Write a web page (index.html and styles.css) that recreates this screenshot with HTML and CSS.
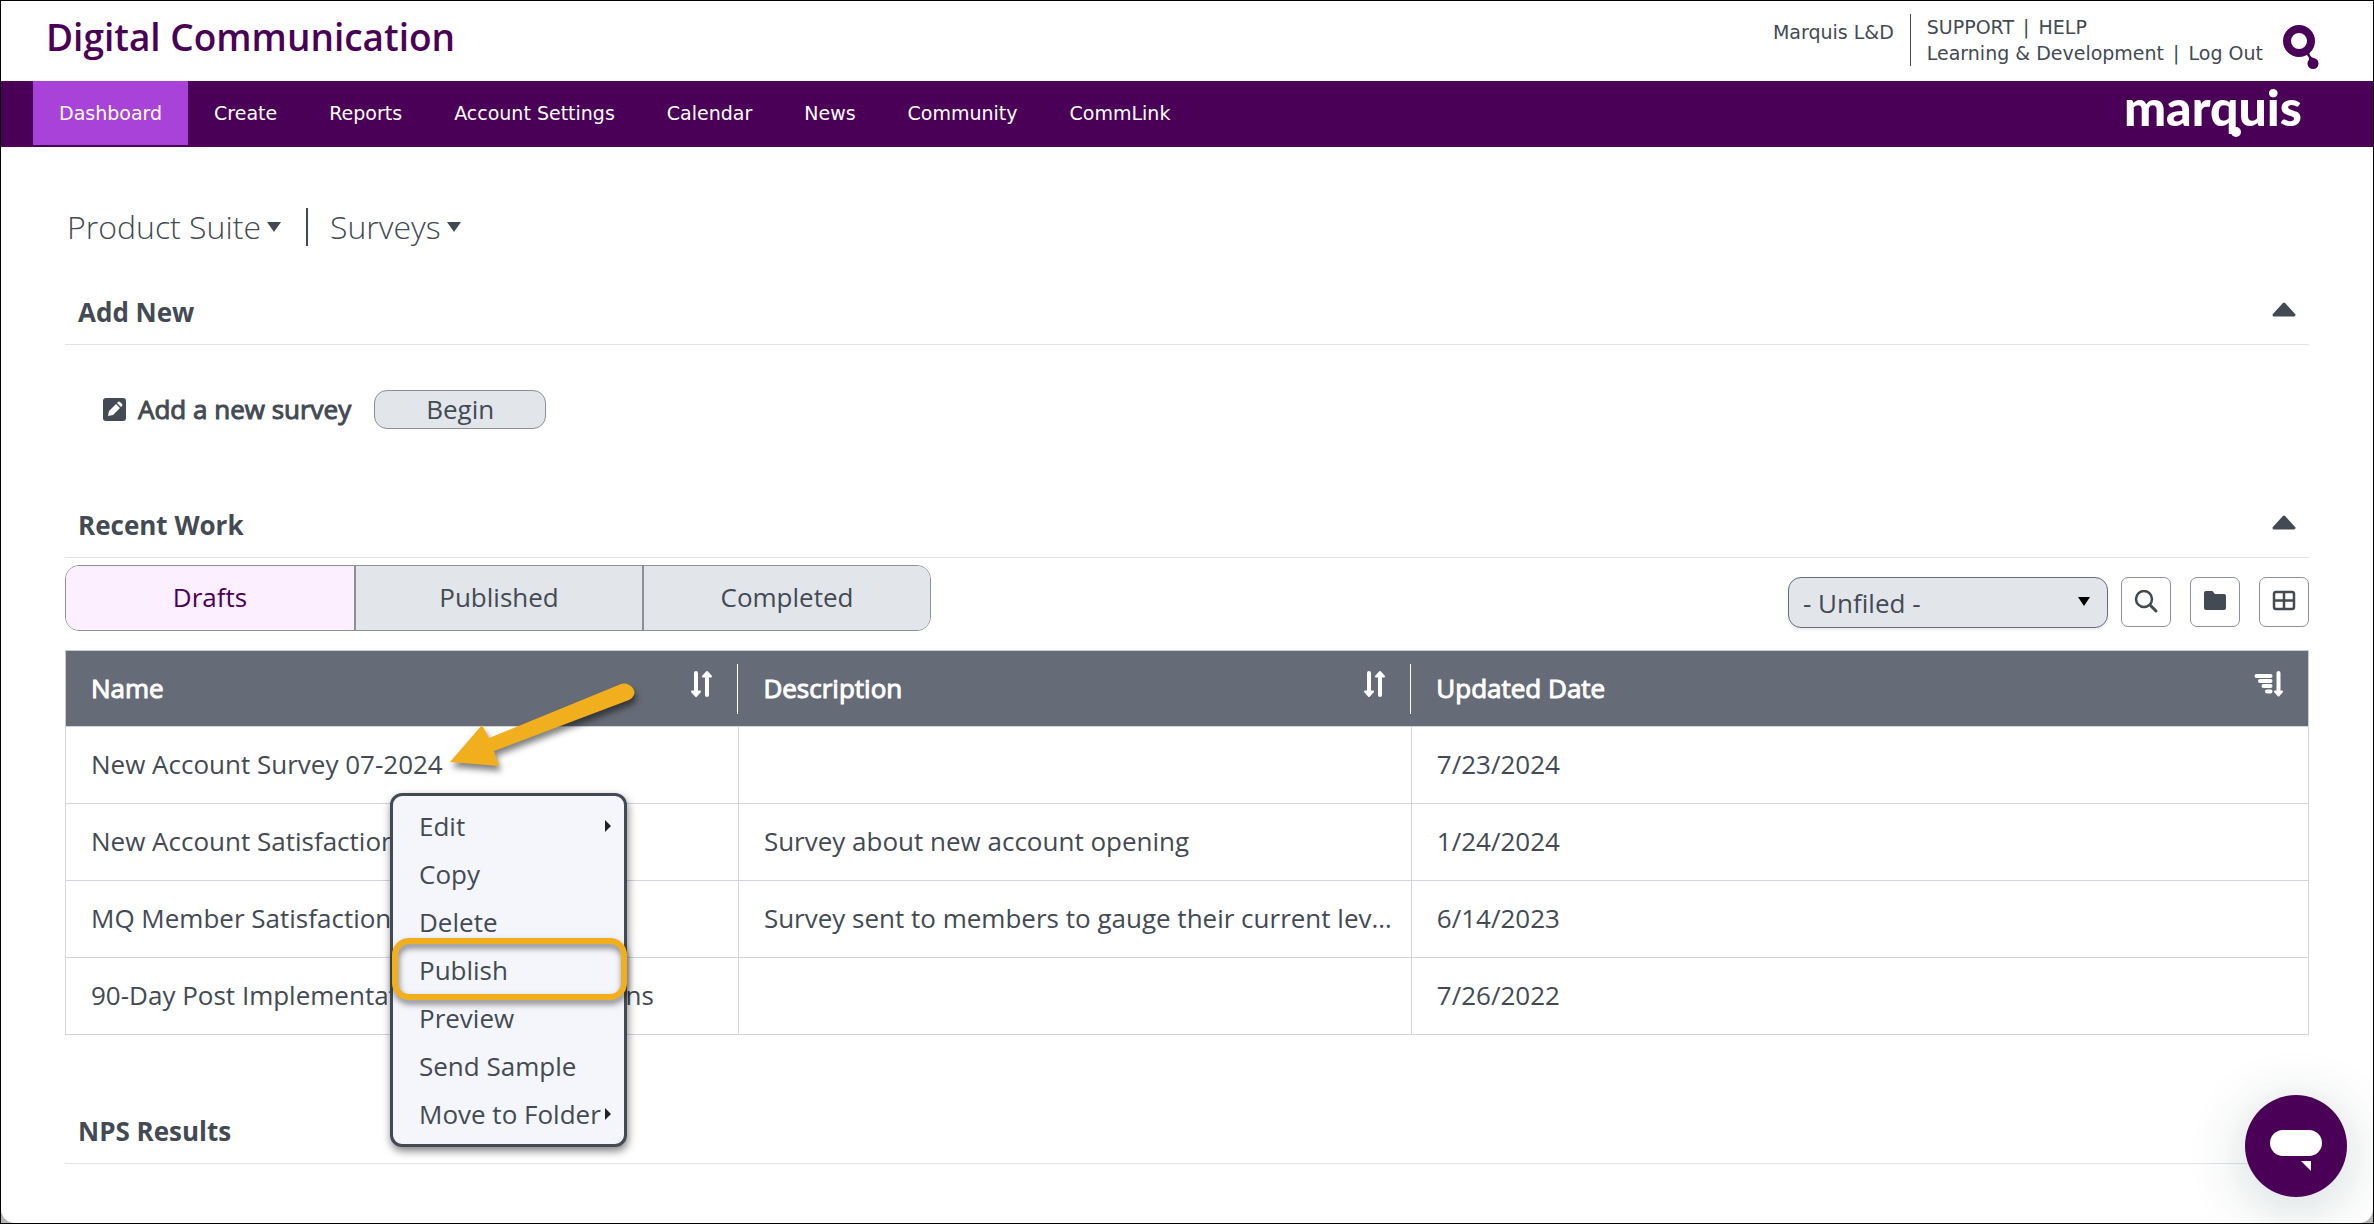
FILE: index.html
```html
<!DOCTYPE html>
<html lang="en">
<head>
    <meta charset="UTF-8">
    <meta name="viewport" content="width=device-width, initial-scale=1.0">
    <title>Digital Communication</title>
    <link rel="stylesheet" href="styles.css">
</head>
<body>
    <svg class="defs" width="0" height="0">
        <symbol id="sort" viewBox="0 0 24 28">
            <g stroke="#fff" stroke-width="4" stroke-linecap="round" stroke-linejoin="round" fill="#fff">
                <path d="M7 3v17M18 8v17"/>
                <path d="M3 21.500h8L7 26zM14 6.500h8L18 2z" stroke-width="2"/>
            </g>
        </symbol>
    </svg>

    <div class="page">
        <header class="top-bar">
            <h1>Digital Communication</h1>
            <div class="account">
                <span class="account-name">Marquis L&amp;D</span>
                <div class="account-links">
                    <div><a href="#">SUPPORT</a> <span class="sep">|</span> <a href="#">HELP</a></div>
                    <div><a href="#">Learning &amp; Development</a> <span class="sep">|</span> <a href="#">Log Out</a></div>
                </div>
                <svg class="brand-mark" viewBox="0 0 36 46">
                    <circle cx="16" cy="17" r="12" fill="none" stroke="#4b0058" stroke-width="8"/>
                    <path d="M22 30q5 2 4 8l6-4q-5 0-6-6z" fill="#4b0058"/>
                    <circle cx="30" cy="39.500" r="5.500" fill="#4b0058"/>
                </svg>
            </div>
        </header>

        <nav class="main-nav">
            <a class="active" href="#">Dashboard</a>
            <a href="#">Create</a>
            <a href="#">Reports</a>
            <a href="#">Account Settings</a>
            <a href="#">Calendar</a>
            <a href="#">News</a>
            <a href="#">Community</a>
            <a href="#">CommLink</a>
            <span class="logo">mar<span class="logo-q">q</span>uis</span>
        </nav>

        <main>
            <div class="breadcrumb">
                <button type="button">Product Suite<span class="arrow-down"></span></button>
                <button type="button">Surveys<span class="arrow-down"></span></button>
            </div>

            <section class="add-new">
                <div class="section-head">
                    <h2>Add New</h2>
                    <button type="button" class="toggle" aria-label="Collapse Add New">
                        <svg width="24" height="15" viewBox="0 0 24 15"><path d="M12 2L22 13H2z"/></svg>
                    </button>
                </div>
                <div class="add-row">
                    <svg width="23" height="23" viewBox="0 0 23 23">
                        <rect width="23" height="23" rx="3" fill="#434a54"/>
                        <path d="M5 18l1-5 7-7 4 4-7 7zM14 5l1-1q1-1 2 0l2 2q1 1 0 2l-1 1z" fill="#fff"/>
                    </svg>
                    <span class="add-label">Add a new survey</span>
                    <button type="button" class="begin">Begin</button>
                </div>
            </section>

            <section class="recent">
                <div class="section-head">
                    <h2>Recent Work</h2>
                    <button type="button" class="toggle" aria-label="Collapse Recent Work">
                        <svg width="24" height="15" viewBox="0 0 24 15"><path d="M12 2L22 13H2z"/></svg>
                    </button>
                </div>
                <div class="toolbar">
                    <div class="tabs">
                        <button type="button" class="selected">Drafts</button>
                        <button type="button">Published</button>
                        <button type="button">Completed</button>
                    </div>
                    <div class="tools">
                        <div class="folder-select">
                            <select aria-label="Folder">
                                <option>- Unfiled -</option>
                            </select>
                        </div>
                        <button type="button" class="tool" aria-label="Search">
                            <svg width="24" height="24" viewBox="0 0 24 24" fill="none" stroke="#434a54">
                                <circle cx="10" cy="9" r="8" stroke-width="2.500"/>
                                <path d="M16 15l6 6" stroke-width="3" stroke-linecap="round"/>
                            </svg>
                        </button>
                        <button type="button" class="tool" aria-label="Folders">
                            <svg width="24" height="24" viewBox="0 0 24 24" fill="#434a54">
                                <path d="M3 1h6q1 0 2 2l1 1h9q2 0 2 2v12q0 2-2 2H3q-2 0-2-2V3q0-2 2-2z"/>
                            </svg>
                        </button>
                        <button type="button" class="tool" aria-label="Grid view">
                            <svg width="24" height="24" viewBox="0 0 24 24" fill="none" stroke="#434a54" stroke-width="2.500">
                                <rect x="2" y="2" width="20" height="17" rx="2"/>
                                <path d="M12 2v17M2 10.500h20"/>
                            </svg>
                        </button>
                    </div>
                </div>

                <table>
                    <thead>
                        <tr>
                            <th class="col-name"><div>Name
                                <svg width="24" height="28" viewBox="0 0 24 28"><use href="#sort"/></svg></div></th>
                            <th class="col-desc"><div>Description
                                <svg width="24" height="28" viewBox="0 0 24 28"><use href="#sort"/></svg></div></th>
                            <th><div>Updated Date
                                <svg width="30" height="28" viewBox="0 0 30 28" stroke="#fff" stroke-width="4" stroke-linecap="round">
                                    <path d="M2.500 6h14M6 11h10.500M9.500 16h7M13 21.500h3.500M24.500 3v17"/>
                                    <path d="M21 21.500h7l-3.500 4z" fill="#fff" stroke-width="2" stroke-linejoin="round"/>
                                </svg></div></th>
                        </tr>
                    </thead>
                    <tbody>
                        <tr>
                            <td class="menu-cell">New Account Survey 07-2024
                                <svg class="pointer" width="200" height="100" viewBox="0 0 200 100">
                                    <path d="M7 78L39 41L46 54L178 0Q184 -2 189 3Q194 9 189 14L186 16L51 67L56 82Z" fill="#f1ae1d"/>
                                </svg>
                                <ul class="context-menu">
                                    <li><a href="#">Edit<span class="arrow-right"></span></a></li>
                                    <li><a href="#">Copy</a></li>
                                    <li><a href="#">Delete</a></li>
                                    <li class="marked"><a href="#">Publish</a></li>
                                    <li><a href="#">Preview</a></li>
                                    <li><a href="#">Send Sample</a></li>
                                    <li><a href="#">Move to Folder<span class="arrow-right"></span></a></li>
                                </ul>
                            </td>
                            <td></td>
                            <td>7/23/2024</td>
                        </tr>
                        <tr>
                            <td>New Account Satisfaction</td>
                            <td>Survey about new account opening</td>
                            <td>1/24/2024</td>
                        </tr>
                        <tr>
                            <td>MQ Member Satisfaction</td>
                            <td>Survey sent to members to gauge their current level of satisfaction</td>
                            <td>6/14/2023</td>
                        </tr>
                        <tr>
                            <td>90-Day Post Implementation Survey Questions</td>
                            <td></td>
                            <td>7/26/2022</td>
                        </tr>
                    </tbody>
                </table>
            </section>

            <section class="nps">
                <div class="section-head">
                    <h2>NPS Results</h2>
                </div>
            </section>
        </main>

        <button type="button" class="chat" aria-label="Open chat">
            <svg width="102" height="102" viewBox="0 0 102 102" fill="#fff">
                <rect x="25" y="35" width="52" height="26" rx="13"/>
                <path d="M56 66h10v10z"/>
            </svg>
        </button>
    </div>
</body>
</html>
```

FILE: styles.css
```css
* {
    box-sizing: border-box;
}
body {
    margin: 0;
    background-color: #b5b5b5;
    font-family: "Open Sans", sans-serif;
    font-size: 26px;
    line-height: 36px;
    color: #434a54;
    border: 1px solid #000;
}
a {
    color: inherit;
    text-decoration: none;
}
button, select {
    font: inherit;
    color: inherit;
    margin: 0;
    padding: 0;
    border: none;
    background: none;
    cursor: pointer;
}
svg {
    display: block;
}
.defs {
    position: absolute;
}
.page {
    min-height: calc(100vh - 2px);
    background-color: #fff;
    border-radius: 0 0 14px 14px;
}

/* header */
.top-bar {
    display: flex;
    justify-content: space-between;
    height: 80px;
    padding: 0 54px 0 45px;
}
h1 {
    margin: 0;
    font-size: 37px;
    font-weight: 600;
    line-height: 72px;
    color: #4b0058;
}
.account {
    display: flex;
    align-items: flex-start;
    font-family: Verdana, "DejaVu Sans", sans-serif;
    font-size: 19px;
    line-height: 26px;
}
.account-name {
    padding-top: 18px;
}
.account-links {
    margin: 13px 20px 0 16px;
    padding-left: 16px;
    border-left: 1px solid #434a54;
}
.sep {
    margin: 0 3px;
}
.brand-mark {
    width: 36px;
    height: 46px;
    margin-top: 23px;
}
.main-nav {
    display: flex;
    height: 66px;
    padding: 0 71px 2px 32px;
    background-color: #4b0058;
    color: #fff;
    font-family: Verdana, "DejaVu Sans", sans-serif;
    font-size: 19px;
    line-height: 64px;
}
.main-nav a {
    padding: 0 26px;
}
.main-nav .active {
    background-color: #a842d9;
}
.logo {
    margin-left: auto;
    font-family: Lato, sans-serif;
    font-size: 50px;
    font-weight: 900;
    line-height: 52px;
}
.logo-q {
    position: relative;
}
.logo-q::after {
    content: "";
    position: absolute;
    right: -2px;
    bottom: 0;
    width: 10px;
    height: 10px;
    border-radius: 50%;
    background-color: #fff;
}

/* content */
main {
    padding: 54px 64px 0;
}
.breadcrumb {
    display: flex;
    align-items: center;
    height: 52px;
    padding-left: 2px;
    font-size: 32px;
    font-weight: 300;
}
.breadcrumb button {
    display: flex;
    align-items: center;
    height: 38px;
    line-height: 38px;
}
.breadcrumb button + button {
    margin-left: 25px;
    padding-left: 22px;
    border-left: 2px solid #434a54;
}
.arrow-down {
    margin-left: 6px;
    border: 7px solid transparent;
    border-top: 10px solid #434a54;
    border-bottom: none;
}
.section-head {
    display: flex;
    align-items: center;
    justify-content: space-between;
    height: 64px;
    padding: 0 13px 2px 13px;
    border-bottom: 1px solid #dfe2e8;
}
h2 {
    margin: 0;
    font-size: 26px;
    font-weight: 700;
}
.toggle {
    padding-bottom: 5px;
}
.toggle svg {
    fill: #434a54;
    stroke: #434a54;
    stroke-width: 3;
    stroke-linejoin: round;
}
.add-new {
    margin-top: 28px;
}
.add-row {
    display: flex;
    align-items: center;
    padding: 45px 38px 0;
}
.add-label {
    margin: 0 23px 0 12px;
    padding-bottom: 2px;
    -webkit-text-stroke: 1px;
}
.begin {
    width: 172px;
    height: 39px;
    padding-bottom: 2px;
    border: 1px solid #8a8f99;
    border-radius: 13px;
    background-color: #e2e5ea;
}
.recent {
    margin-top: 65px;
}
.toolbar {
    display: flex;
    justify-content: space-between;
    padding: 7px 0 19px;
}
.tabs {
    display: flex;
    border: 1px solid #8a8f99;
    border-radius: 14px;
    overflow: hidden;
}
.tabs button {
    width: 288px;
    height: 64px;
    padding-bottom: 2px;
    background-color: #e2e5ea;
}
.tabs button + button {
    border-left: 2px solid #8a8f99;
}
.tabs .selected {
    background-color: #fcefff;
    color: #4b0058;
}
.tools {
    display: flex;
    gap: 19px;
    padding-top: 12px;
}
.folder-select {
    position: relative;
    margin-right: -6px;
}
.folder-select::after {
    content: "";
    position: absolute;
    top: 20px;
    right: 18px;
    border: 6px solid transparent;
    border-top: 9px solid #000;
    border-bottom: none;
    pointer-events: none;
}
select {
    appearance: none;
    display: block;
    width: 320px;
    height: 51px;
    padding: 0 14px;
    border: 1px solid #666c77;
    border-radius: 13px;
    background-color: #e2e5ea;
    box-shadow: 0 2px 3px rgba(0, 0, 0, 0.08);
}
.tool {
    display: flex;
    align-items: center;
    justify-content: center;
    width: 50px;
    height: 50px;
    border: 1px solid #8a8f99;
    border-radius: 7px;
}

/* table */
table {
    width: 100%;
    table-layout: fixed;
    border-collapse: collapse;
    border: 1px solid #c9cad4;
}
th {
    height: 76px;
    padding: 0;
    background-color: #666c77;
    color: #fff;
    font-weight: 400;
    text-align: left;
    -webkit-text-stroke: 1px;
}
th div {
    display: flex;
    justify-content: space-between;
    height: 50px;
    padding: 6px 24px 8px 25px;
    border-right: 1px solid #fff;
}
th:last-child div {
    border-right: none;
}
.col-name, .col-desc {
    width: 30%;
}
td {
    height: 77px;
    padding: 0 18px 3px 25px;
    border: 1px solid #d4d5dc;
    white-space: nowrap;
    overflow: hidden;
    text-overflow: ellipsis;
}
.menu-cell {
    position: relative;
    overflow: visible;
}

/* context menu */
.context-menu {
    position: absolute;
    z-index: 2;
    top: 66px;
    left: 324px;
    width: 237px;
    margin: 0;
    padding: 6px 0;
    list-style: none;
    border: 3px solid #434a54;
    border-radius: 12px;
    background-color: #f4f6fb;
    box-shadow: 1px 4px 8px rgba(0, 0, 0, 0.5);
}
.context-menu a {
    position: relative;
    display: block;
    padding-left: 26px;
    line-height: 48px;
}
.arrow-right {
    position: absolute;
    top: 18px;
    right: 13px;
    border: 6px solid transparent;
    border-left-color: #222;
    border-right: none;
}
.marked {
    position: relative;
}
.marked::after {
    content: "";
    position: absolute;
    inset: -8px -3px -6px -1px;
    border: 6px solid #f1ae1d;
    border-radius: 17px;
    filter: drop-shadow(1px 4px 3px rgba(0, 0, 0, 0.5));
    pointer-events: none;
}
.pointer {
    position: absolute;
    z-index: 3;
    top: -43px;
    left: 377px;
    overflow: visible;
    filter: drop-shadow(2px 5px 3px rgba(0, 0, 0, 0.5));
    pointer-events: none;
}
.nps {
    margin-top: 65px;
}

/* chat bubble */
.chat {
    position: fixed;
    right: 27px;
    bottom: 27px;
    border-radius: 50%;
    background-color: #4b0058;
    box-shadow: 0 10px 60px rgba(10, 50, 50, 0.2);
}
```
